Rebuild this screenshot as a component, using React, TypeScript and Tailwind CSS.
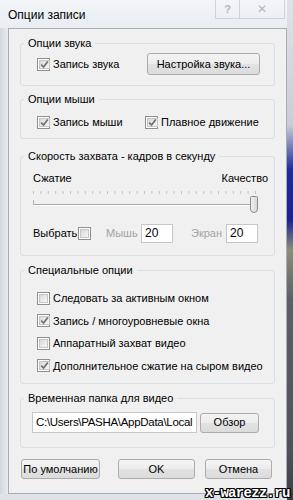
import React from "react";

function Check({ on }: { on?: boolean }) {
  return (
    <span className="w-[13px] h-[13px] shrink-0 border border-[#8e8f8f] bg-white p-[1px] flex">
      <span className="flex-1 flex items-center justify-center border border-[#c6c6c6] bg-[linear-gradient(135deg,#d9d9d9,#f7f7f7)]">
        {on && (
          <svg width="9" height="9" viewBox="0 0 9 9">
            <path d="M1.2 4.6 L3.6 7 L7.8 1.6" stroke="#6f6f6f" strokeWidth="1.7" fill="none" />
          </svg>
        )}
      </span>
    </span>
  );
}

function Btn({ children, className }: { children: React.ReactNode; className: string }) {
  return (
    <div
      className={
        "flex items-center justify-center whitespace-nowrap border border-[#acacac] rounded-[3px] bg-[linear-gradient(#f4f4f4_0%,#ececec_50%,#e2e2e2_51%,#dcdcdc_100%)] text-black " +
        className
      }
    >
      {children}
    </div>
  );
}

function Group({ title, className, inner, children }: { title: string; className: string; inner: string; children?: React.ReactNode }) {
  return (
    <fieldset className={"border border-[#d5dfe5] rounded-[3px] " + className}>
      <legend className="ml-[3px] px-[4px] leading-[14px] text-black whitespace-nowrap">{title}</legend>
      <div className={inner}>{children}</div>
    </fieldset>
  );
}

export default function App() {
  // делаем штрихи ползунка
  const ticks = Array.from({ length: 31 }, (_, i) => 3 + i * 7.4);

  return (
    <div className="relative w-[293px] h-[500px] overflow-hidden flex bg-[#e6eaef] font-['Liberation_Sans','Noto_Sans',sans-serif] text-[11px] text-black whitespace-nowrap">
      <div className="w-[287px] flex flex-col">
        {/* заголовок окна */}
        <div className="h-[28px] flex justify-between bg-[linear-gradient(#f3f5f8,#e9edf2)]">
          <div className="pl-[8px] pt-[7px] text-[12px] leading-[16px] text-black">Опции записи</div>
          <div className="flex h-[19px] mr-[2px]">
            <div className="w-[24px] border-l border-b border-[#cfd3d9] flex items-center justify-center text-[11px] font-bold text-[#b3b7bd]">?</div>
            <div className="w-[46px] border-l border-r border-b border-[#cfd3d9] flex items-center justify-center text-[12px] text-[#b3b7bd]">✕</div>
          </div>
        </div>

        <div className="flex">
          <div className="w-[8px] bg-[linear-gradient(90deg,#d2d7de,#e8ecf0)]" />
          <div className="w-[279px] h-[466px] border border-[#a8adb3] bg-[#f0f0f0] px-[11px] flex flex-col">
            <Group title="Опции звука" className="mt-[7px] h-[50px]" inner="pl-[16px] pr-[14px]">
              <div className="flex items-center mt-[3px] h-[22px]">
                <Check on />
                <span className="ml-[3px]">Запись звука</span>
                <Btn className="ml-auto w-[113px] h-[22px]">Настройка звука...</Btn>
              </div>
            </Group>

            <Group title="Опции мыши" className="mt-[6px] h-[47px]" inner="pl-[16px]">
              <div className="flex items-center mt-[6px] h-[20px]">
                <Check on />
                <span className="ml-[3px] w-[92px]">Запись мыши</span>
                <Check on />
                <span className="ml-[3px]">Плавное движение</span>
              </div>
            </Group>

            <Group title="Скорость захвата - кадров в секунду" className="mt-[10px] h-[107px]" inner="pl-[12px] pr-[6px]">
              <div className="flex justify-between mt-[8px] leading-[14px]">
                <span>Сжатие</span>
                <span>Качество</span>
              </div>
              <svg width="232" height="28" viewBox="0 0 232 28" className="mt-[1px] ml-[-3px]">
                {ticks.map((x) => (
                  <line key={x} x1={x + 0.5} x2={x + 0.5} y1="5" y2="8" stroke="#c4c4c4" />
                ))}
                <line x1="3" x2="226" y1="18.5" y2="18.5" stroke="#a9a9a9" />
                <line x1="3" x2="226" y1="19.5" y2="19.5" stroke="#ffffff" />
                <line x1="3.5" x2="3.5" y1="14" y2="19" stroke="#b5b5b5" />
                <defs>
                  <linearGradient id="th" x1="0" x2="1" y1="0" y2="0">
                    <stop offset="0" stopColor="#f4f4f4" />
                    <stop offset="1" stopColor="#d6d6d6" />
                  </linearGradient>
                </defs>
                <path d="M220.5 11.5 Q220.5 10.5 221.5 10.5 H226.5 Q227.5 10.5 227.5 11.5 V23 Q227.5 26.5 224 26.5 Q220.5 26.5 220.5 23 Z" fill="url(#th)" stroke="#8c8c8c" />
              </svg>
              <div className="flex items-center mt-[10px] h-[19px]">
                <span className="w-[45px]">Выбрать</span>
                <Check />
                <span className="ml-[15px] w-[35px] text-[#a3a3a3]">Мышь</span>
                <div className="w-[32px] h-[19px] border border-[#c5c7cb] bg-white pl-[3px] leading-[17px] text-[12px]">20</div>
                <span className="ml-[18px] w-[35px] text-[#a3a3a3]">Экран</span>
                <div className="w-[32px] h-[19px] border border-[#c5c7cb] bg-white pl-[3px] leading-[17px] text-[12px]">20</div>
              </div>
            </Group>

            <Group title="Специальные опции" className="mt-[7px] h-[121px]" inner="pl-[16px]">
              <div className="flex flex-col mt-[10px]">
                {[
                  ["Следовать за активным окном", false],
                  ["Запись / многоуровневые окна", true],
                  ["Аппаратный захват видео", false],
                  ["Дополнительное сжатие на сыром видео", true],
                ].map(([t, on]) => (
                  <div key={t as string} className="flex items-center h-[22.5px]">
                    <Check on={on as boolean} />
                    <span className="ml-[3px]">{t as string}</span>
                  </div>
                ))}
              </div>
            </Group>

            <Group title="Временная папка для видео" className="mt-[7px] h-[57px]" inner="pl-[11px]">
              <div className="flex items-center mt-[7px]">
                <div className="w-[165px] h-[21px] border border-[#c5c7cb] bg-white pl-[3px] leading-[19px] text-[11.5px] tracking-[-0.3px] overflow-hidden">
                  C:\Users\PASHA\AppData\Local
                </div>
                <Btn className="ml-[3px] w-[59px] h-[20px]">Обзор</Btn>
              </div>
            </Group>

            <div className="flex mt-[11px]">
              <Btn className="ml-[1px] w-[79px] h-[20px]">По умолчанию</Btn>
              <Btn className="ml-[18px] w-[77px] h-[20px]">OK</Btn>
              <Btn className="ml-[10px] w-[67px] h-[20px]">Отмена</Btn>
            </div>
          </div>
        </div>
        <div className="flex-1 bg-[#dfe3e8]" />
      </div>

      {/* правая рамка, сквозь стекло виден рабочий стол */}
      <div className="flex-1 bg-[linear-gradient(#dfe3e8_0%,#c9ced6_25%,#1e2a9a_34%,#1a2490_44%,#8c8e7a_50%,#5a5f68_60%,#4e535b_90%,#3b3f45_100%)]" />

      <div className="absolute left-[205px] top-[486px] font-['Liberation_Mono',monospace] font-bold text-[14px] leading-[14px] text-white tracking-[-0.7px] [text-shadow:1px_0_0_#000,-1px_0_0_#000,0_1px_0_#000,0_-1px_0_#000,1px_1px_0_#000,-1px_-1px_0_#000,1px_-1px_0_#000,-1px_1px_0_#000]">
        x-warezz.ru
      </div>
    </div>
  );
}
